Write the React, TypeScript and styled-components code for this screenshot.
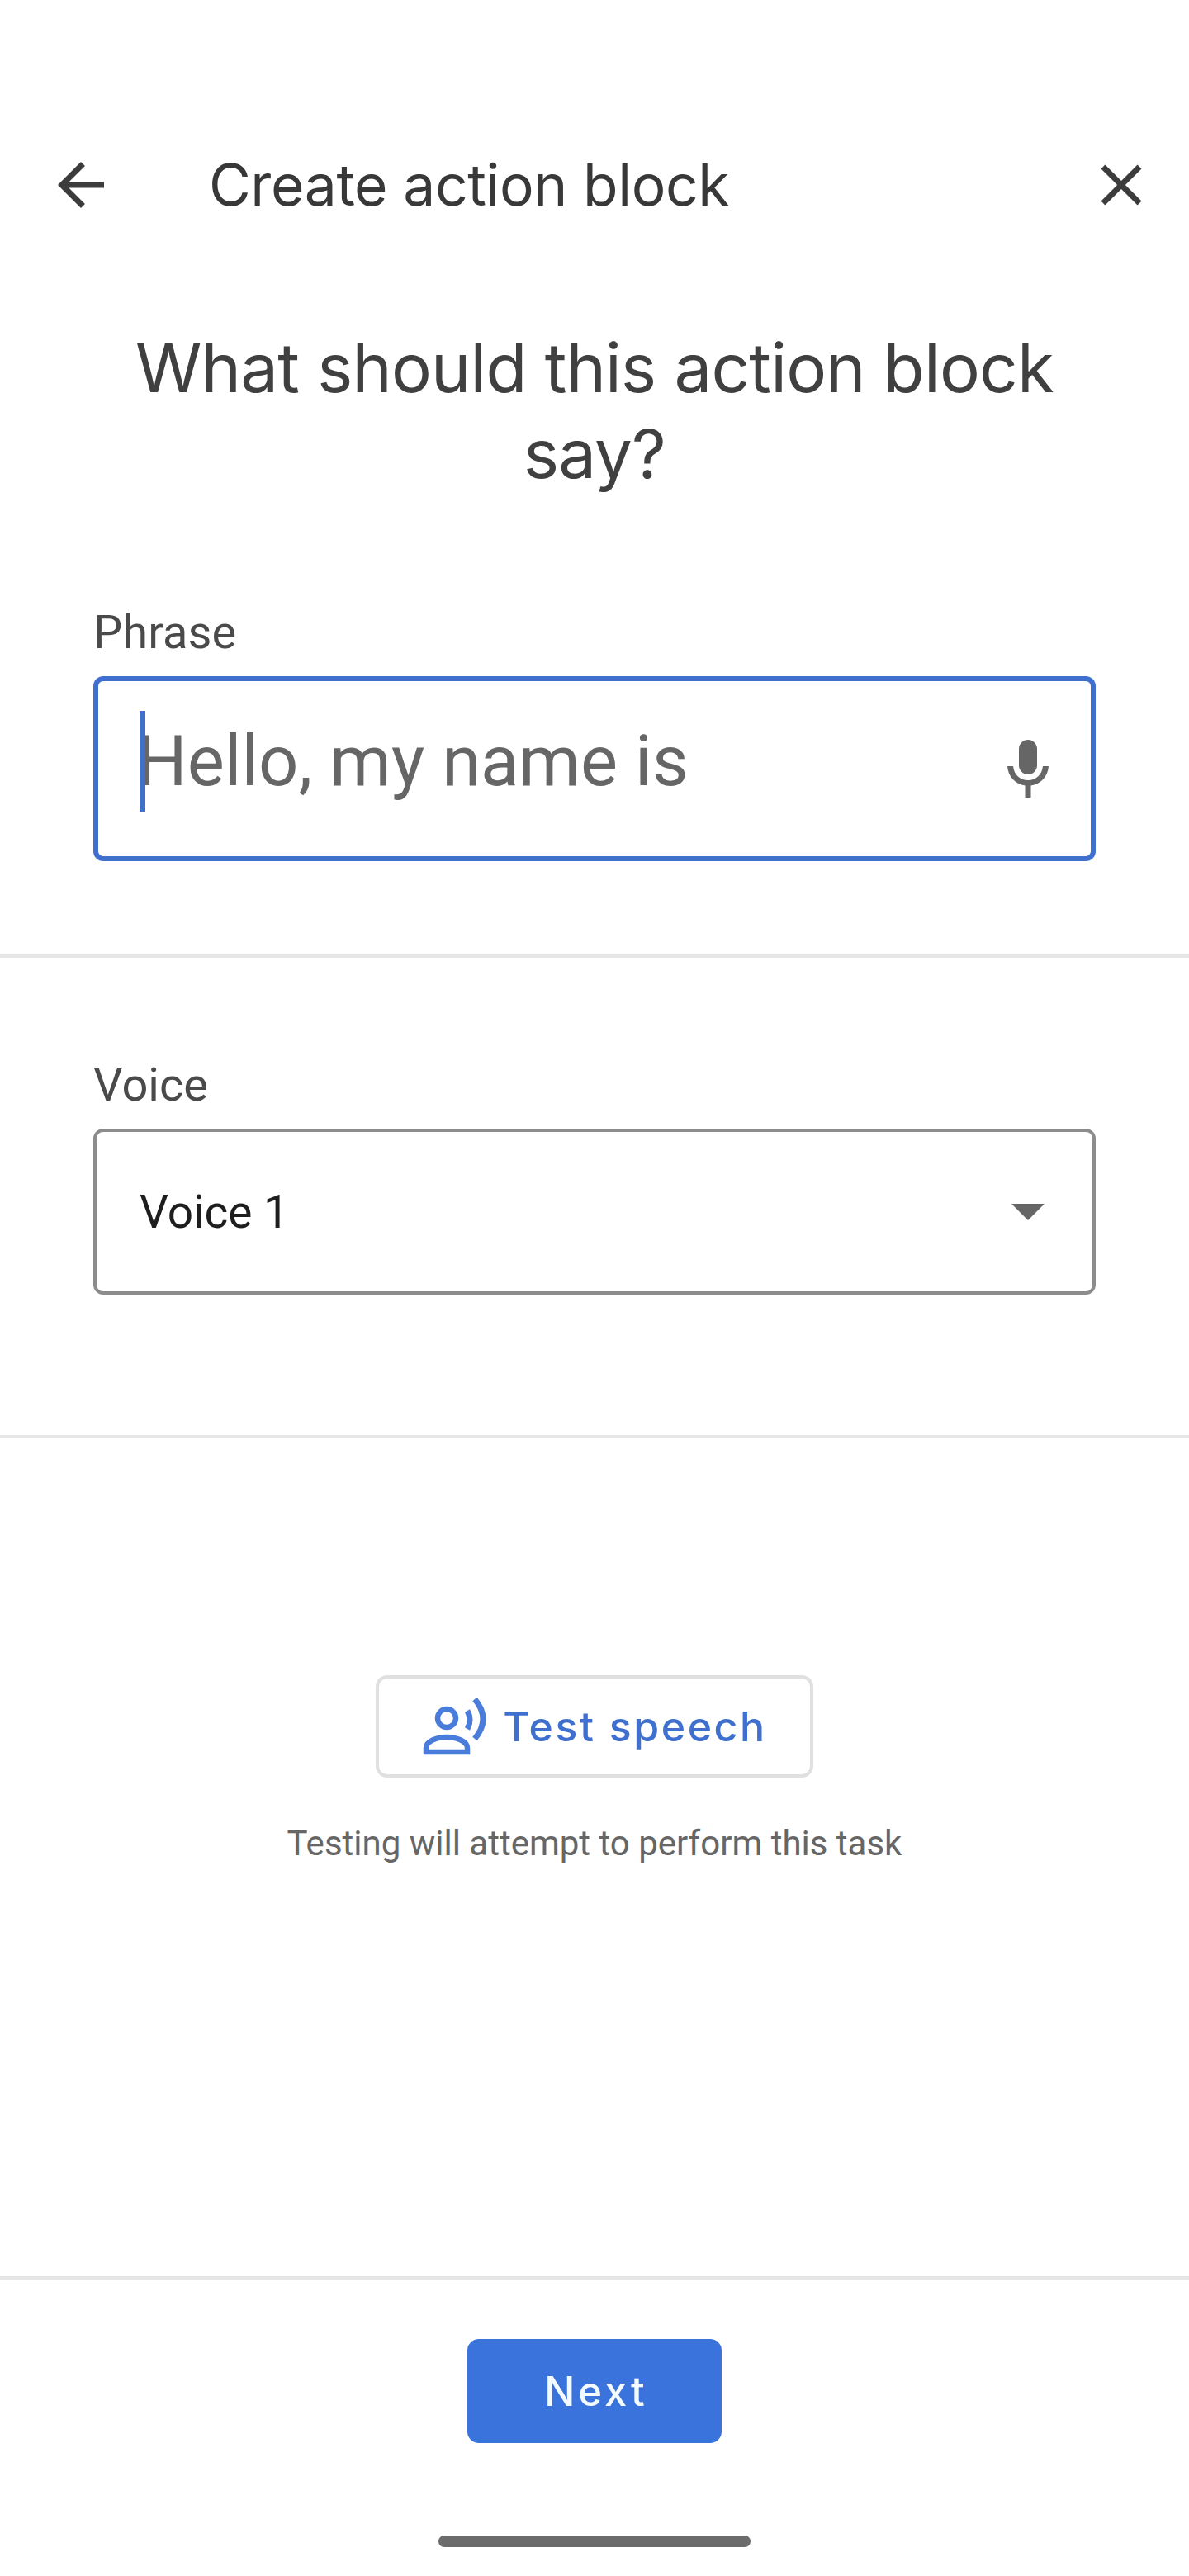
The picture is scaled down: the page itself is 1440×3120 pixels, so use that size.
import React from "react";
import styled, { createGlobalStyle } from "styled-components";

const Global = createGlobalStyle`
  html, body { margin: 0; padding: 0; background: #fff; }
  * { box-sizing: border-box; }
`;

const Page = styled.div`
  width: 1440px;
  height: 3120px;
  background: #fff;
  display: flex;
  flex-direction: column;
  font-family: Roboto, "Liberation Sans", sans-serif;
  overflow: hidden;
`;

const Header = styled.header`
  height: 120px;
  margin-top: 164px;
  padding: 0 40px 0 56px;
  display: flex;
  align-items: center;
`;

const IconSlot = styled.div`
  width: 84px;
  height: 84px;
  flex: none;
  display: flex;
  align-items: center;
  justify-content: center;
  color: #3c3c3c;
`;

const Title = styled.h1`
  flex: 1;
  margin: 0 0 0 113px;
  font-family: Inter, sans-serif;
  font-weight: 400;
  font-size: 69.5px;
  letter-spacing: -0.4px;
  line-height: 80px;
  color: #383838;
`;

const Heading = styled.h2`
  margin: 110px 0 0;
  padding: 0 140px;
  text-align: center;
  font-family: Inter, sans-serif;
  font-weight: 400;
  font-size: 81.6px;
  letter-spacing: -0.8px;
  line-height: 104px;
  color: #404040;
`;

const Field = styled.section<{ $top: number; $bottom: number }>`
  margin-top: ${(p) => p.$top}px;
  padding: 0 113px ${(p) => p.$bottom}px;
`;

const Label = styled.div`
  font-size: 56px;
  line-height: 60px;
  color: #4a4a4a;
  margin-bottom: 23px;
`;

const PhraseBox = styled.div`
  position: relative;
  height: 224px;
  border: 6px solid #3f70cf;
  border-radius: 12px;
  padding: 0 44px 0 47px;
  display: flex;
  align-items: center;
  justify-content: space-between;
`;

const Placeholder = styled.span`
  font-size: 85px;
  line-height: 100px;
  color: #666;
  margin-bottom: 18px;
`;

const Caret = styled.span`
  position: absolute;
  left: 50px;
  top: 36px;
  width: 7px;
  height: 122px;
  background: #3f70cf;
`;

const SelectBox = styled.div`
  height: 201px;
  border: 4px solid #8c8c8c;
  border-radius: 12px;
  padding: 0 58px 0 52px;
  display: flex;
  align-items: center;
  justify-content: space-between;
  font-size: 55px;
  color: #1e1e1e;
`;

const Triangle = styled.span`
  width: 0;
  height: 0;
  border-left: 20px solid transparent;
  border-right: 20px solid transparent;
  border-top: 20px solid #666;
`;

const Divider = styled.hr`
  margin: 0;
  height: 4px;
  border: 0;
  background: #e6e6e6;
  flex: none;
`;

const TestArea = styled.section`
  height: 1015px;
  padding-top: 287px;
  display: flex;
  flex-direction: column;
  align-items: center;
`;

const TestButton = styled.div`
  width: 530px;
  height: 124px;
  border: 4px solid #e0e0e0;
  border-radius: 14px;
  display: flex;
  align-items: center;
  justify-content: center;
  gap: 18px;
  color: #3f70cf;
  font-family: Inter, sans-serif;
  font-weight: 500;
  font-size: 50px;
  letter-spacing: 2.6px;
`;

const Hint = styled.p`
  margin: 54px 0 0;
  font-size: 42px;
  line-height: 52px;
  color: #666;
`;

const Footer = styled.footer`
  flex: 1;
  padding-top: 72px;
  display: flex;
  flex-direction: column;
  align-items: center;
`;

const NextButton = styled.div`
  width: 308px;
  height: 126px;
  padding-left: 4px;
  border-radius: 14px;
  background: #3b73dc;
  color: #f4fbff;
  font-family: Inter, sans-serif;
  font-weight: 500;
  font-size: 49px;
  letter-spacing: 4px;
  display: flex;
  align-items: center;
  justify-content: center;
`;

const HomeBar = styled.div`
  margin-top: 112px;
  width: 378px;
  height: 14px;
  border-radius: 7px;
  background: #6b6b6b;
`;

export default function App() {
  return (
    <Page>
      <Global />
      <Header>
        <IconSlot>
          <svg width="84" height="84" viewBox="0 0 24 24" fill="currentColor">
            <path d="M20 11H7.83l5.59-5.59L12 4l-8 8 8 8 1.41-1.41L7.83 13H20v-2z" />
          </svg>
        </IconSlot>
        <Title>Create action block</Title>
        <IconSlot>
          <svg width="84" height="84" viewBox="0 0 24 24" fill="currentColor">
            <path d="M19 6.41 17.59 5 12 10.59 6.41 5 5 6.41 10.59 12 5 17.59 6.41 19 12 13.41 17.59 19 19 17.59 13.41 12z" />
          </svg>
        </IconSlot>
      </Header>
      <Heading>What should this action block say?</Heading>
      <Field $top={134} $bottom={113}>
        <Label>Phrase</Label>
        <PhraseBox>
          <Caret />
          <Placeholder>Hello, my name is</Placeholder>
          <svg width="64" height="72" viewBox="0 0 64 72" fill="#666">
            <rect x="21" y="1" width="22" height="42" rx="11" />
            <path d="M7 33h7c1 10 8 17 18 17s17-7 18-17h7c-1 13-10 22-21.5 23.5V71h-7V56.5C17 55 8 46 7 33z" />
          </svg>
        </PhraseBox>
      </Field>
      <Divider />
      <Field $top={124} $bottom={170}>
        <Label>Voice</Label>
        <SelectBox>
          Voice 1
          <Triangle />
        </SelectBox>
      </Field>
      <Divider />
      <TestArea>
        <TestButton>
          <svg width="80" height="72" viewBox="0 0 80 72" fill="none" stroke="#4a7cdc" strokeWidth="6.5">
            <circle cx="30" cy="26" r="11" />
            <path d="M5 67v-5C5 54 18 49 30 49s25 5 25 13v5z" />
            <path d="M55 17q6 11 0 22" strokeWidth="7" />
            <path d="M64 3q20 24 0 48" strokeWidth="7" />
          </svg>
          Test speech
        </TestButton>
        <Hint>Testing will attempt to perform this task</Hint>
      </TestArea>
      <Divider />
      <Footer>
        <NextButton>Next</NextButton>
        <HomeBar />
      </Footer>
    </Page>
  );
}
